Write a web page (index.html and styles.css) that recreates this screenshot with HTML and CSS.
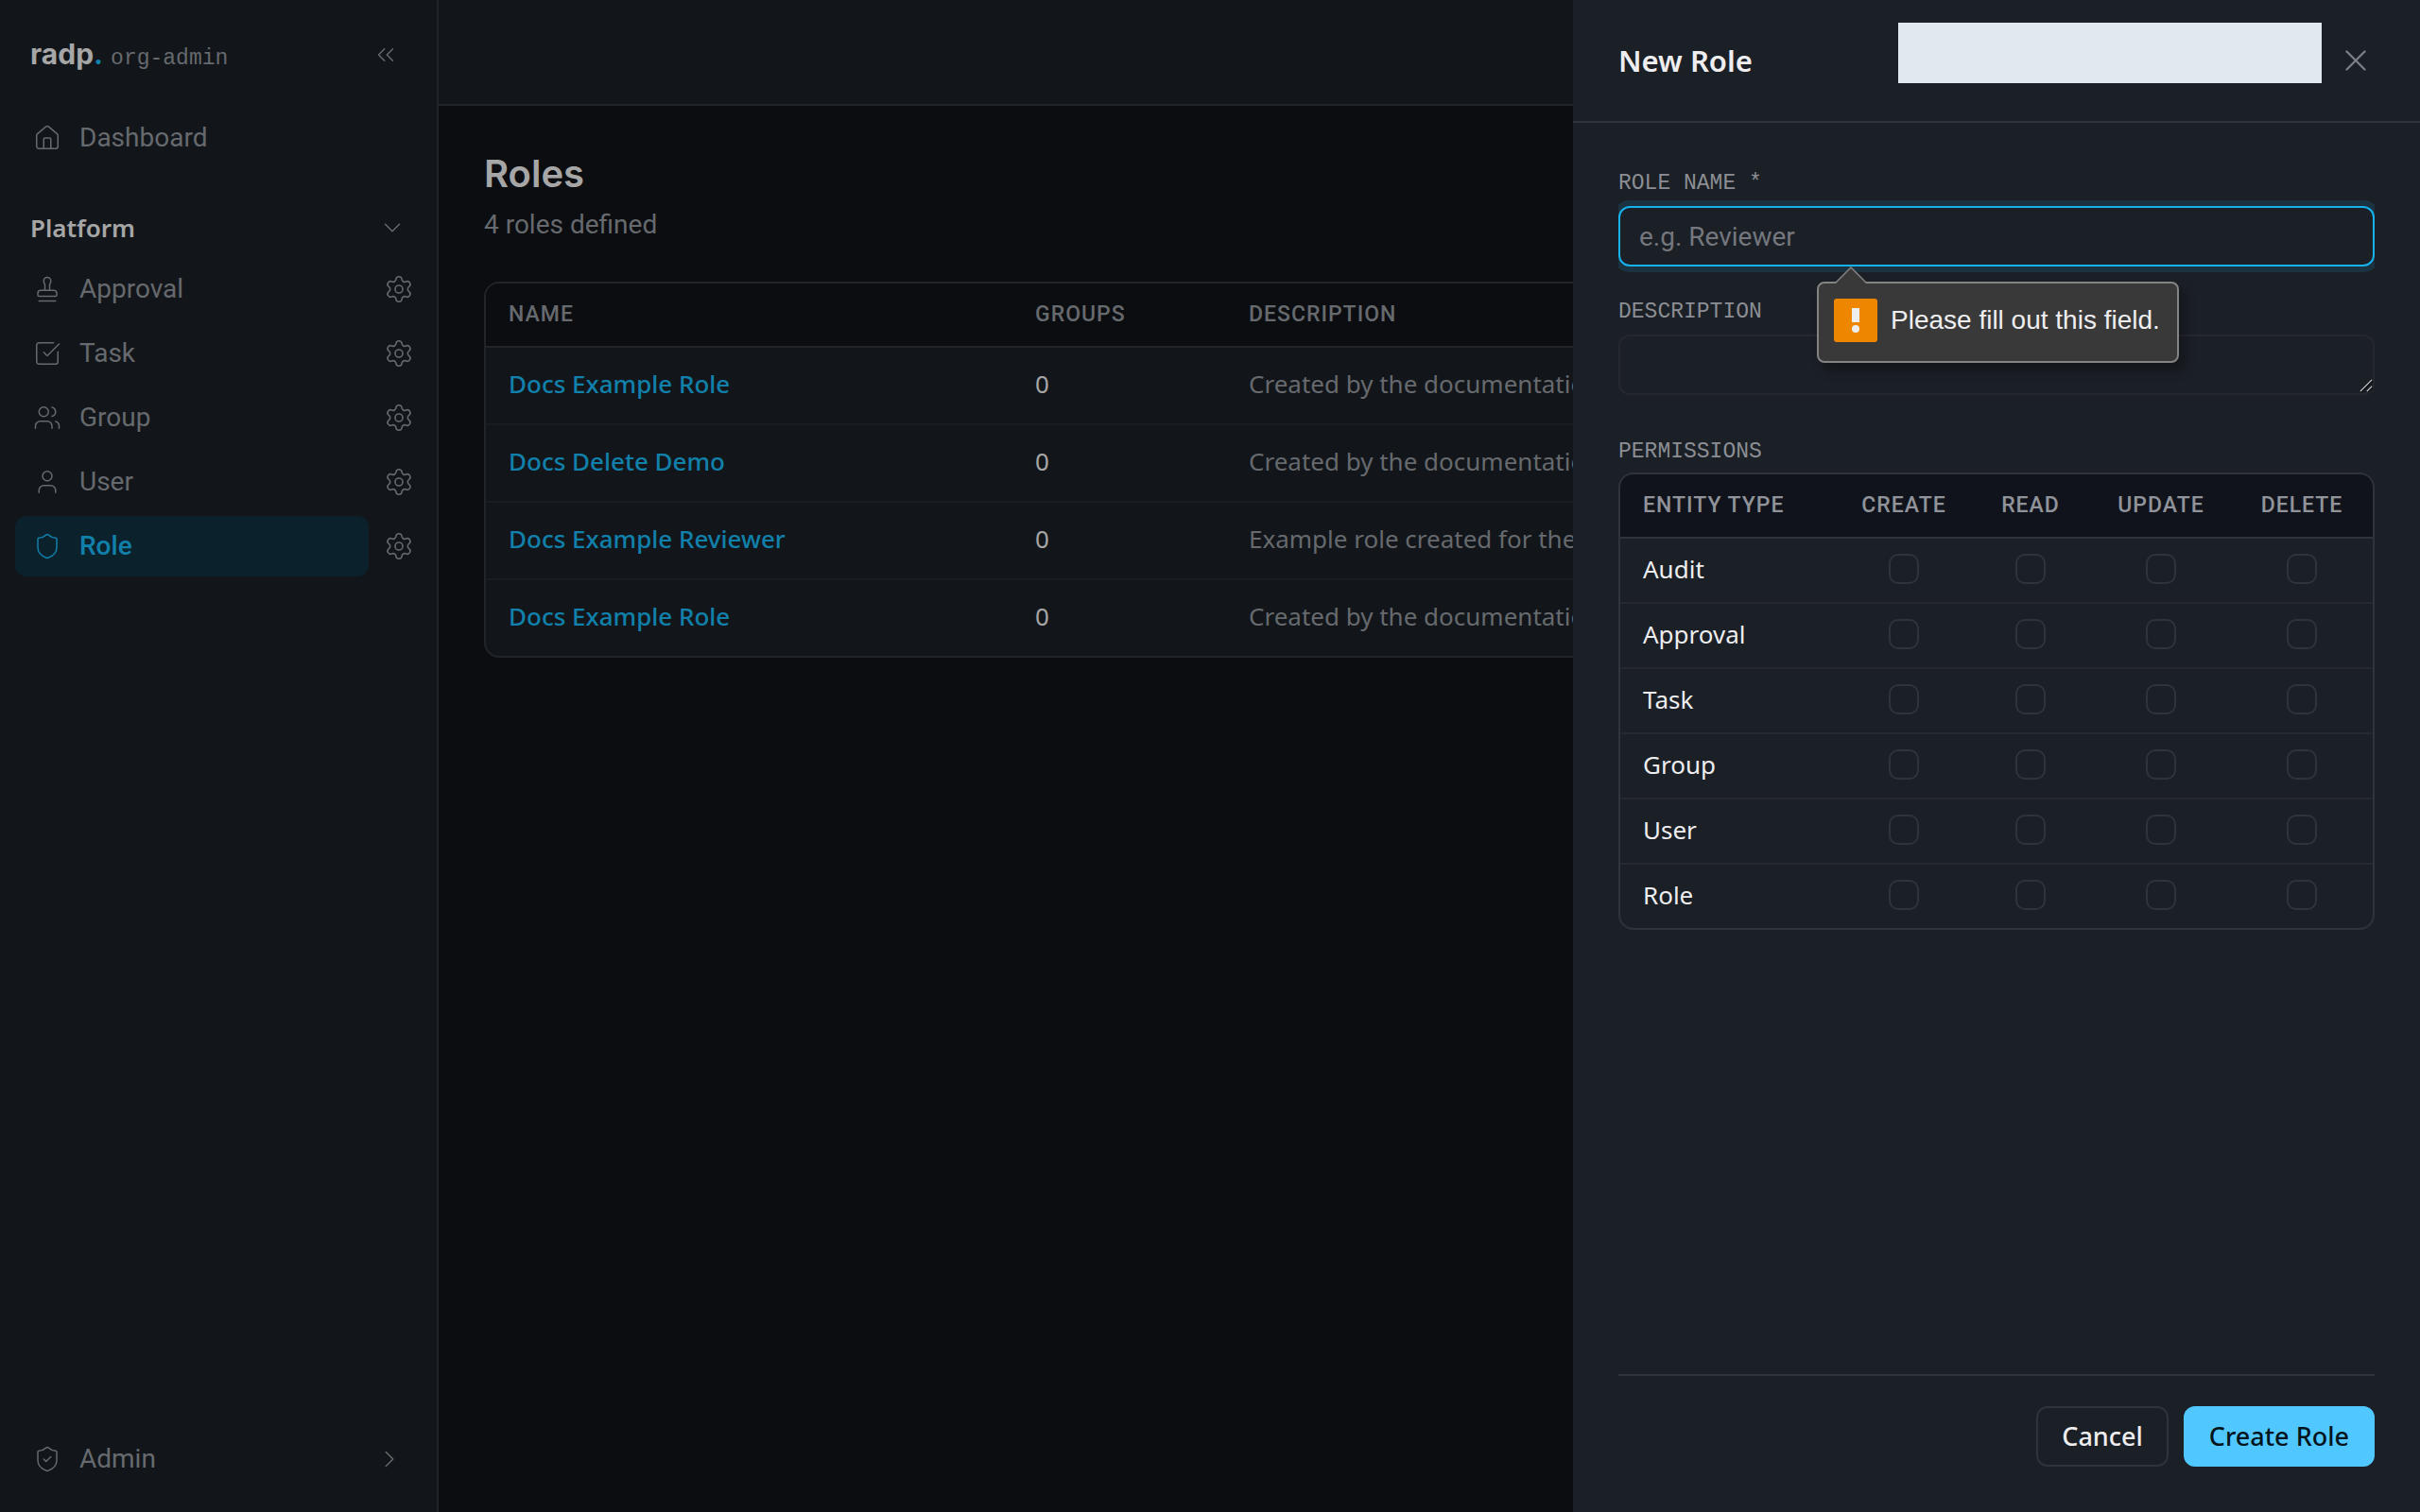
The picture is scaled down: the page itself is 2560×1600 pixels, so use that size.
FILE: index.html
```html
<!DOCTYPE html>
<html lang="en">
<head>
<meta charset="utf-8">
<title>Roles – radp</title>
<link rel="stylesheet" href="styles.css">
</head>
<body>
<svg class="sprite" aria-hidden="true">
  <symbol id="gear" viewBox="0 0 24 24"><path d="M9.671 4.136a2.34 2.34 0 0 1 4.659 0 2.34 2.34 0 0 0 3.319 1.915 2.34 2.34 0 0 1 2.33 4.033 2.34 2.34 0 0 0 0 3.831 2.34 2.34 0 0 1-2.33 4.033 2.34 2.34 0 0 0-3.319 1.915 2.34 2.34 0 0 1-4.659 0 2.34 2.34 0 0 0-3.32-1.915 2.34 2.34 0 0 1-2.33-4.033 2.34 2.34 0 0 0 0-3.831A2.34 2.34 0 0 1 6.35 6.051a2.34 2.34 0 0 0 3.319-1.915"/><circle cx="12" cy="12" r="3"/></symbol>
  <symbol id="shield" viewBox="0 0 24 24"><path d="M20 13c0 5-3.5 7.5-7.66 8.95a1 1 0 0 1-.67-.01C7.5 20.5 4 18 4 13V6a1 1 0 0 1 1-1c2 0 4.5-1.2 6.24-2.72a1.17 1.17 0 0 1 1.52 0C14.51 3.81 17 5 19 5a1 1 0 0 1 1 1z"/></symbol>
</svg>
<div class="app">
  <aside class="sidebar">
    <div class="brand">
      <span class="brand-name">radp<span class="dot">.</span></span>
      <span class="brand-sub">org-admin</span>
      <button class="collapse" type="button" aria-label="Collapse sidebar"><svg class="icon" viewBox="0 0 24 24"><path d="m11 17-5-5 5-5"/><path d="m18 17-5-5 5-5"/></svg></button>
    </div>
    <nav class="nav">
      <a class="nav-link" href="#"><svg class="icon" viewBox="0 0 24 24"><path d="M15 21v-8a1 1 0 0 0-1-1h-4a1 1 0 0 0-1 1v8"/><path d="M3 10a2 2 0 0 1 .709-1.528l7-6a2 2 0 0 1 2.582 0l7 6A2 2 0 0 1 21 10v9a2 2 0 0 1-2 2H5a2 2 0 0 1-2-2z"/></svg>Dashboard</a>
      <button class="group" type="button">Platform<svg class="icon" viewBox="0 0 24 24"><path d="m6 9 6 6 6-6"/></svg></button>
      <ul class="items">
        <li class="item">
          <a class="nav-link" href="#"><svg class="icon" viewBox="0 0 24 24"><path d="M14 13V8.5C14 7 15 7 15 5a3 3 0 0 0-6 0c0 2 1 2 1 3.5V13"/><path d="M20 15.5a2.5 2.5 0 0 0-2.5-2.5h-11A2.5 2.5 0 0 0 4 15.5V17a1 1 0 0 0 1 1h14a1 1 0 0 0 1-1z"/><path d="M5 22h14"/></svg>Approval</a>
          <button class="settings" type="button" aria-label="Approval settings"><svg class="icon gear"><use href="#gear"/></svg></button>
        </li>
        <li class="item">
          <a class="nav-link" href="#"><svg class="icon" viewBox="0 0 24 24"><path d="M21 10.656V19a2 2 0 0 1-2 2H5a2 2 0 0 1-2-2V5a2 2 0 0 1 2-2h12.344"/><path d="m9 11 3 3L22 4"/></svg>Task</a>
          <button class="settings" type="button" aria-label="Task settings"><svg class="icon gear"><use href="#gear"/></svg></button>
        </li>
        <li class="item">
          <a class="nav-link" href="#"><svg class="icon" viewBox="0 0 24 24"><path d="M16 21v-2a4 4 0 0 0-4-4H6a4 4 0 0 0-4 4v2"/><path d="M16 3.128a4 4 0 0 1 0 7.744"/><path d="M22 21v-2a4 4 0 0 0-3-3.87"/><circle cx="9" cy="7" r="4"/></svg>Group</a>
          <button class="settings" type="button" aria-label="Group settings"><svg class="icon gear"><use href="#gear"/></svg></button>
        </li>
        <li class="item">
          <a class="nav-link" href="#"><svg class="icon" viewBox="0 0 24 24"><path d="M19 21v-2a4 4 0 0 0-4-4H9a4 4 0 0 0-4 4v2"/><circle cx="12" cy="7" r="4"/></svg>User</a>
          <button class="settings" type="button" aria-label="User settings"><svg class="icon gear"><use href="#gear"/></svg></button>
        </li>
        <li class="item">
          <a class="nav-link active" href="#" aria-current="page"><svg class="icon"><use href="#shield"/></svg>Role</a>
          <button class="settings" type="button" aria-label="Role settings"><svg class="icon gear"><use href="#gear"/></svg></button>
        </li>
      </ul>
    </nav>
    <a class="nav-link admin" href="#"><svg class="icon" viewBox="0 0 24 24"><use href="#shield"/><path d="m9 12 2 2 4-4"/></svg>Admin<svg class="icon end" viewBox="0 0 24 24"><path d="m9 18 6-6-6-6"/></svg></a>
  </aside>

  <div class="page">
    <header class="topbar"></header>
    <main class="content">
      <h1 class="title">Roles</h1>
      <p class="subtitle">4 roles defined</p>
      <div class="card">
        <table class="roles">
          <thead><tr><th class="col-name">Name</th><th class="col-groups">Groups</th><th>Description</th></tr></thead>
          <tbody>
            <tr><td><a href="#">Docs Example Role</a></td><td>0</td><td class="desc">Created by the documentation</td></tr>
            <tr><td><a href="#">Docs Delete Demo</a></td><td>0</td><td class="desc">Created by the documentation</td></tr>
            <tr><td><a href="#">Docs Example Reviewer</a></td><td>0</td><td class="desc">Example role created for the</td></tr>
            <tr><td><a href="#">Docs Example Role</a></td><td>0</td><td class="desc">Created by the documentation</td></tr>
          </tbody>
        </table>
      </div>
    </main>
  </div>
</div>

<section class="drawer" role="dialog" aria-labelledby="drawer-title">
  <header class="drawer-head">
    <h2 class="drawer-title" id="drawer-title">New Role</h2>
    <button class="close" type="button" aria-label="Close"><svg class="icon" viewBox="0 0 24 24"><path d="M18 6 6 18"/><path d="m6 6 12 12"/></svg></button>
    <div class="notice"></div>
  </header>
  <form class="form">
    <div class="fields">
      <div class="field">
        <label for="role-name">Role name *</label>
        <div class="control">
          <input class="input focused" id="role-name" type="text" placeholder="e.g. Reviewer">
          <div class="tip" role="alert">
            <svg class="tip-arrow" viewBox="0 0 34 18"><path d="M1 18 17 1l16 17z" fill="#393939"/><path d="M1 17 17 1l16 16" fill="none" stroke="#838383" stroke-width="1.5"/></svg>
            <svg class="tip-icon" viewBox="0 0 46 46"><rect width="46" height="46" rx="3" fill="#ee8600"/><path d="M19 10h8v15h-8z" fill="#eee"/><circle cx="23" cy="32" r="4" fill="#eee"/></svg>
            <span>Please fill out this field.</span>
          </div>
        </div>
      </div>
      <div class="field">
        <label for="role-desc">Description</label>
        <div class="control">
          <textarea class="input area" id="role-desc" rows="1"></textarea>
          <svg class="grip" viewBox="0 0 16 16"><path d="M1 15 15 1M9 15l6-6" stroke="#08090b" stroke-width="2" transform="translate(1 1)"/><path d="M1 15 15 1M9 15l6-6" stroke="#cfcfcf" stroke-width="1.5"/></svg>
        </div>
      </div>
      <div class="field permissions">
        <span class="label" id="perm">Permissions</span>
        <div class="card perm-card">
          <table class="perms" aria-labelledby="perm">
            <thead><tr><th class="c-entity">Entity type</th><th class="c-create">Create</th><th class="c-read">Read</th><th class="c-update">Update</th><th>Delete</th></tr></thead>
            <tbody>
              <tr><td>Audit</td><td><input type="checkbox" aria-label="Audit create"></td><td><input type="checkbox" aria-label="Audit read"></td><td><input type="checkbox" aria-label="Audit update"></td><td><input type="checkbox" aria-label="Audit delete"></td></tr>
              <tr><td>Approval</td><td><input type="checkbox" aria-label="Approval create"></td><td><input type="checkbox" aria-label="Approval read"></td><td><input type="checkbox" aria-label="Approval update"></td><td><input type="checkbox" aria-label="Approval delete"></td></tr>
              <tr><td>Task</td><td><input type="checkbox" aria-label="Task create"></td><td><input type="checkbox" aria-label="Task read"></td><td><input type="checkbox" aria-label="Task update"></td><td><input type="checkbox" aria-label="Task delete"></td></tr>
              <tr><td>Group</td><td><input type="checkbox" aria-label="Group create"></td><td><input type="checkbox" aria-label="Group read"></td><td><input type="checkbox" aria-label="Group update"></td><td><input type="checkbox" aria-label="Group delete"></td></tr>
              <tr><td>User</td><td><input type="checkbox" aria-label="User create"></td><td><input type="checkbox" aria-label="User read"></td><td><input type="checkbox" aria-label="User update"></td><td><input type="checkbox" aria-label="User delete"></td></tr>
              <tr><td>Role</td><td><input type="checkbox" aria-label="Role create"></td><td><input type="checkbox" aria-label="Role read"></td><td><input type="checkbox" aria-label="Role update"></td><td><input type="checkbox" aria-label="Role delete"></td></tr>
            </tbody>
          </table>
        </div>
      </div>
    </div>
    <footer class="actions">
      <button class="btn" type="button">Cancel</button>
      <button class="btn primary" type="submit">Create Role</button>
    </footer>
  </form>
</section>
</body>
</html>
```
FILE: styles.css
```css
* { box-sizing: border-box; }

:root {
  --ui: Roboto, "Noto Sans", sans-serif;
  --text: "Noto Sans", sans-serif;
  --mono: "Liberation Mono", monospace;
  --bright: #a6a6a7;
  --muted: #66696d;
  --accent: #1180aa;
  --line: #212429;
}

body {
  margin: 0;
  background: #0b0d11;
  color: var(--bright);
  font: 400 28px/40px var(--ui);
}

button, input, textarea { font: inherit; color: inherit; }
button { border: 0; padding: 0; background: none; }
a { color: inherit; text-decoration: none; }
h1, h2, p, ul { margin: 0; padding: 0; }
ul { list-style: none; }
table { border-collapse: separate; border-spacing: 0; width: 100%; table-layout: fixed; }

.sprite { position: absolute; width: 0; height: 0; }

.icon {
  display: block;
  flex: none;
  width: 30px;
  height: 30px;
  fill: none;
  stroke: currentColor;
  stroke-width: 1.2;
  stroke-linecap: round;
  stroke-linejoin: round;
}
.icon.gear { width: 32px; height: 32px; }

.app {
  display: grid;
  grid-template-columns: 464px minmax(0, 1fr);
  min-height: 100vh;
}

/* Sidebar */
.sidebar {
  display: flex;
  flex-direction: column;
  padding: 0 16px 24px;
  border-right: 2px solid var(--line);
  background: #12161a;
  color: var(--muted);
}
.brand {
  display: flex;
  align-items: baseline;
  gap: 8px;
  height: 114px;
  padding: 37px 16px 0;
}
.brand-name { font: 700 30px/40px Inter, sans-serif; color: var(--bright); }
.dot { color: var(--accent); }
.brand-sub { font: 400 23px/40px var(--mono); }
.collapse { display: grid; place-items: center; align-self: flex-start; width: 44px; height: 42px; margin-left: auto; }

.nav-link {
  display: flex;
  flex: 1;
  align-items: center;
  gap: 19px;
  height: 64px;
  padding: 0 19px;
  border-radius: 12px;
}
.nav-link.active { background: #0b222d; color: var(--accent); font-weight: 500; }
.group {
  display: flex;
  align-items: center;
  justify-content: space-between;
  width: 100%;
  height: 64px;
  margin-top: 32px;
  padding: 0 16px 2px;
  color: var(--bright);
  font: 600 26px/40px var(--text);
}
.group .icon { color: var(--muted); }
.items { display: grid; gap: 4px; }
.item { display: flex; gap: 8px; }
.settings { display: grid; place-items: center; width: 48px; }
.admin { flex: none; margin-top: auto; }
.end { margin-left: auto; }

/* Page */
.page { min-width: 0; }
.topbar { height: 112px; border-bottom: 2px solid var(--line); background: #12161a; }
.content { padding: 48px; }
.title { font: 600 40px/48px Inter, sans-serif; }
.subtitle { margin-top: 10px; color: var(--muted); }

.card { overflow: hidden; border: 2px solid var(--line); border-radius: 16px; }
.content .card { margin-top: 40px; background: #12161a; }

th {
  height: 68px;
  padding: 0 24px;
  border-bottom: 2px solid var(--line);
  text-align: left;
  text-transform: uppercase;
  font: 500 23px/32px var(--ui);
  letter-spacing: 1px;
}
td { font: 400 26px/36px var(--text); padding: 0 24px 4px; }
.roles th { background: #0b0d11; color: var(--muted); }
.roles td { height: 82px; border-bottom: 2px solid #191c20; white-space: nowrap; }
.roles tr:last-child td { height: 80px; border-bottom: 0; }
.roles a { color: var(--accent); font-weight: 500; }
.roles .desc { color: var(--muted); overflow: hidden; }
.col-name { width: 557px; }
.col-groups { width: 226px; }

/* Drawer */
.drawer {
  position: fixed;
  inset: 0 0 0 auto;
  display: flex;
  flex-direction: column;
  width: 896px;
  max-width: 100%;
  background: #1b1f26;
  color: #eeeef0;
}
.drawer-head {
  position: relative;
  display: flex;
  align-items: center;
  justify-content: space-between;
  height: 130px;
  padding: 0 48px;
  border-bottom: 2px solid #2f333a;
}
.drawer-title { font: 600 31px/40px var(--text); }
.close { display: grid; place-items: center; width: 40px; height: 40px; color: #7b7e85; }
.close .icon { width: 38px; height: 38px; stroke-width: 1.5; }
.notice { position: absolute; top: 24px; right: 104px; width: 448px; height: 64px; background: #e1e8f0; }

.form { display: flex; flex: 1; flex-direction: column; padding: 48px 48px 0; }
.fields { display: grid; gap: 32px; overflow-x: clip; }
.field { display: grid; gap: 8px; }
.permissions { margin-top: 12px; gap: 6px; }
label, .label {
  color: #8b8e94;
  text-transform: uppercase;
  font: 400 23px/32px var(--mono);
}
.control { position: relative; display: grid; }
.input {
  width: 100%;
  height: 64px;
  padding: 0 20px;
  border: 2px solid #25282f;
  border-radius: 12px;
  outline: 0;
  background: #1b1f26;
}
.input::placeholder { color: #74777d; opacity: 1; }
.focused { border-color: #17b1ec; box-shadow: 0 0 0 6px #1b3240; }
.area { padding: 10px 20px; resize: none; overflow: hidden; }
.grip { position: absolute; right: 2px; bottom: 3px; width: 14px; height: 14px; }

.tip {
  position: absolute;
  z-index: 1;
  top: 80px;
  left: 210px;
  display: flex;
  gap: 14px;
  padding: 16px 18px 20px 16px;
  border: 2px solid #838383;
  border-radius: 8px;
  background: #393939;
  box-shadow: 6px 8px 12px rgba(0, 0, 0, .3);
  white-space: nowrap;
  font: 400 28px/46px "Liberation Sans", sans-serif;
}
.tip-arrow { position: absolute; top: -18px; left: 17px; width: 34px; height: 18px; }
.tip-icon { width: 46px; height: 46px; }

.perm-card { border-color: #2f333a; }
.perms th { border-color: #2f333a; background: #10131b; color: #90939a; }
.perms td { height: 69px; border-bottom: 2px solid #25292f; }
.perms tr:last-child td { height: 67px; border-bottom: 0; }
.perms th:not(:first-child) { padding: 0; text-align: center; }
.perms td:not(:first-child) { padding: 0 0 4px; }
.perms input {
  appearance: none;
  display: block;
  width: 32px;
  height: 32px;
  margin: 0 auto;
  border: 2px solid #2f333a;
  border-radius: 10px;
}
.c-entity { width: 230px; }
.c-create { width: 140px; }
.c-read { width: 128px; }
.c-update { width: 148px; }

.actions {
  display: flex;
  justify-content: flex-end;
  gap: 16px;
  margin-top: auto;
  padding: 32px 0 48px;
  border-top: 2px solid #2f333a;
}
.btn {
  height: 64px;
  padding: 0 25px;
  border: 2px solid #2f333a;
  border-radius: 12px;
  font: 500 27px/40px var(--text);
}
.primary { border-color: #50c8ff; background: #50c8ff; color: #04141c; }
```
